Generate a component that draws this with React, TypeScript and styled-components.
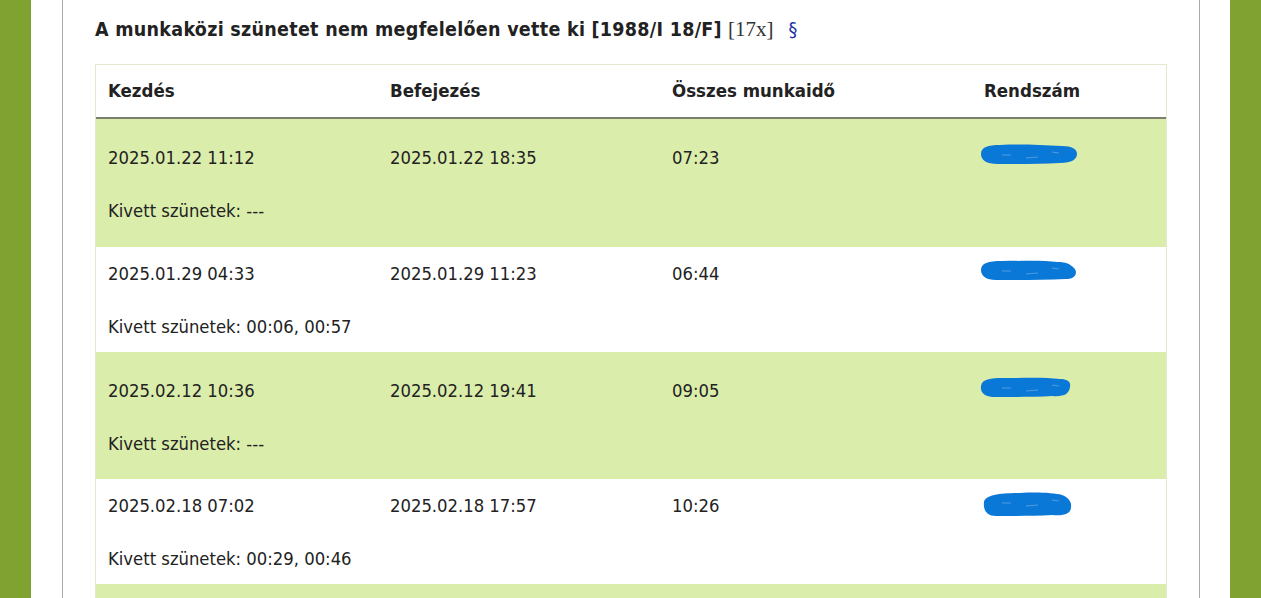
import React from "react";
import styled, { createGlobalStyle } from "styled-components";

const Global = createGlobalStyle`
  html, body { margin: 0; padding: 0; }
  body {
    background: #7fa231;
    font-family: "DejaVu Sans Condensed", "Liberation Sans", sans-serif;
    color: #222;
    overflow: hidden;
  }
`;

const Page = styled.div`
  width: 1261px;
  height: 598px;
  overflow: hidden;
  background: #7fa231;
  display: flex;
  justify-content: center;
`;

const Column = styled.div`
  width: 1199px;
  background: #fff;
  padding: 0 0 0 31px;
  box-sizing: border-box;
`;

const Box = styled.div`
  width: 1138px;
  min-height: 598px;
  border-left: 1px solid #a9a9a9;
  border-right: 1px solid #a9a9a9;
  box-sizing: border-box;
  padding: 18px 32px 0;
  background: #fff;
`;

const Title = styled.h2`
  margin: 0;
  font-size: 19.5px;
  letter-spacing: 0.28px;
  line-height: 22px;
  font-weight: bold;
  color: #222;
  white-space: nowrap;
`;

const Count = styled.span`
  font-family: "Liberation Serif", serif;
  font-weight: normal;
  font-size: 21px;
  letter-spacing: 0;
  color: #333;
  margin-left: 6px;
`;

const Para = styled.a`
  font-weight: normal;
  color: #1a2fa6;
  text-decoration: none;
  margin-left: 15px;
`;

const Table = styled.div`
  margin-top: 23px;
  width: 1072px;
  border: 1px solid #e4e8cf;
  border-bottom: none;
  box-sizing: border-box;
`;

const cols = "282px 282px 312px 1fr";

const Header = styled.div`
  display: grid;
  grid-template-columns: ${cols};
  padding: 15px 0 15px;
  background: #fff;
  border-bottom: 2px solid #7c7e70;
`;

const Th = styled.div`
  padding-left: 12px;
  font-size: 18.5px;
  line-height: 22px;
  font-weight: bold;
  color: #222;
`;

const Row = styled.div<{ $shaded: boolean }>`
  display: grid;
  grid-template-columns: ${cols};
  row-gap: 31px;
  padding: ${(p) => (p.$shaded ? "28px 0 24.5px" : "16px 0 14px")};
  background: ${(p) => (p.$shaded ? "#dbedab" : "#fff")};
`;

const Tail = styled.div`
  height: 40px;
  background: #dbedab;
`;

const Td = styled.div`
  padding-left: 12px;
  font-size: 18.3px;
  line-height: 22px;
  color: #222;
  white-space: nowrap;
`;

const Breaks = styled(Td)`
  grid-column: 1 / -1;
`;

const PlateCell = styled.div`
  padding-left: 8px;
  height: 22px;
  display: flex;
  align-items: flex-start;
  margin-top: -3px;
`;

const blobs = [
  "M1 10 C1 3 8 1 20 1 C40 0 60 1 82 2 C92 2 97 5 97 10 C97 15 92 19 80 19 C60 20 40 20 18 20 C6 20 1 16 1 10 Z",
  "M1 10 C1 3 8 1 22 1 C40 1 62 0 78 2 C86 2 90 4 94 8 C98 12 96 19 86 19 C62 20 40 20 16 20 C6 20 1 16 1 10 Z",
  "M1 9 C2 2 10 1 24 1 C44 1 64 0 80 2 C88 2 91 5 90 10 C89 17 84 20 72 19 C56 20 36 20 16 20 C5 20 0 16 1 9 Z",
  "M4 10 C5 3 20 1 40 1 C58 0 74 1 82 3 C88 5 92 10 91 15 C91 22 84 24 72 23 C54 24 34 24 16 24 C6 24 3 17 4 10 Z",
];

const Plate: React.FC<{ d: string; h: number }> = ({ d, h }) => (
  <svg width="98" height={h} viewBox={`0 0 98 ${h}`} style={{ display: "block" }}>
    <path d={d} fill="#0a78d7" />
    <path d="M22 11 l9 0 M46 14 l12 -1 M72 8 l7 1" stroke="#4d9be3" strokeWidth="1.2" />
  </svg>
);

const rows = [
  { start: "2025.01.22 11:12", end: "2025.01.22 18:35", total: "07:23", br: "---", h: 21 },
  { start: "2025.01.29 04:33", end: "2025.01.29 11:23", total: "06:44", br: "00:06, 00:57", h: 21 },
  { start: "2025.02.12 10:36", end: "2025.02.12 19:41", total: "09:05", br: "---", h: 21 },
  { start: "2025.02.18 07:02", end: "2025.02.18 17:57", total: "10:26", br: "00:29, 00:46", h: 25 },
];

export default function App() {
  return (
    <>
      <Global />
      <Page>
        <Column>
          <Box>
            <Title>
              A munkaközi szünetet nem megfelelően vette ki [1988/I 18/F]
              <Count>[17x]</Count>
              <Para href="#">§</Para>
            </Title>
            <Table>
              <Header>
                <Th>Kezdés</Th>
                <Th>Befejezés</Th>
                <Th>Összes munkaidő</Th>
                <Th>Rendszám</Th>
              </Header>
              {rows.map((r, i) => (
                <Row key={i} $shaded={i % 2 === 0}>
                  <Td>{r.start}</Td>
                  <Td>{r.end}</Td>
                  <Td>{r.total}</Td>
                  <PlateCell>
                    <Plate d={blobs[i % blobs.length]} h={r.h} />
                  </PlateCell>
                  <Breaks>Kivett szünetek: {r.br}</Breaks>
                </Row>
              ))}
              <Tail />
            </Table>
          </Box>
        </Column>
      </Page>
    </>
  );
}
